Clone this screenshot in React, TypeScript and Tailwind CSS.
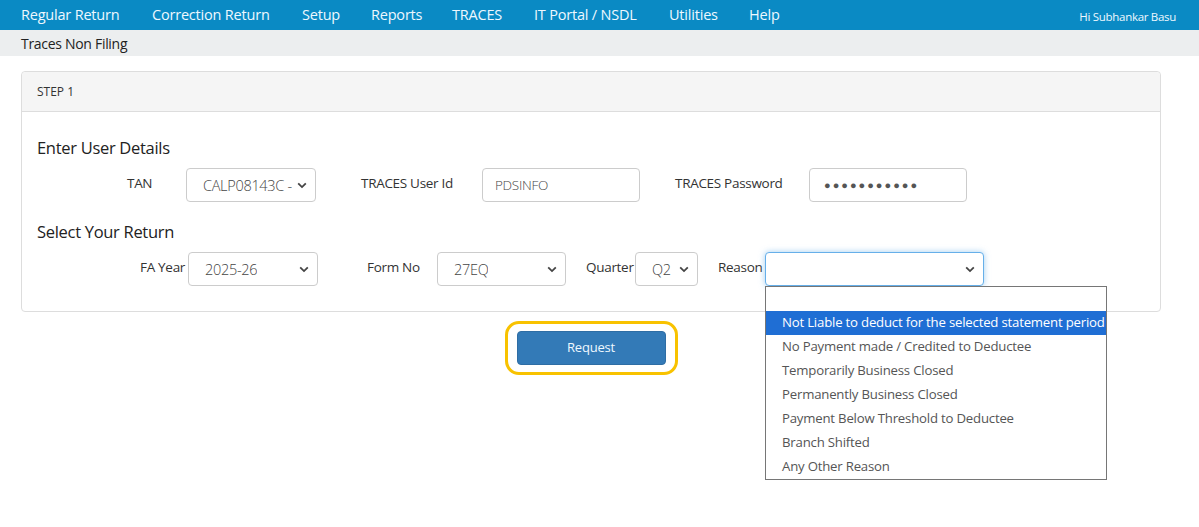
import { ReactNode } from "react";

const navItems = [
  { label: "Regular Return", x: 21 },
  { label: "Correction Return", x: 152 },
  { label: "Setup", x: 302 },
  { label: "Reports", x: 371 },
  { label: "TRACES", x: 452 },
  { label: "IT Portal / NSDL", x: 534 },
  { label: "Utilities", x: 669 },
  { label: "Help", x: 749 },
];

const reasons = [
  "Not Liable to deduct for the selected statement period",
  "No Payment made / Credited to Deductee",
  "Temporarily Business Closed",
  "Permanently Business Closed",
  "Payment Below Threshold to Deductee",
  "Branch Shifted",
  "Any Other Reason",
];

function Chevron() {
  return (
    <svg width="10" height="7" viewBox="0 0 10 7" className="shrink-0">
      <path d="M1.2 1.3 L5 5.1 L8.8 1.3" fill="none" stroke="#444" strokeWidth="1.8" />
    </svg>
  );
}

function FakeSelect({ value, width, focused }: { value: string; width: string; focused?: boolean }) {
  return (
    <div
      className={`${width} h-[34px] flex items-center justify-between pl-[16px] pr-[8px] rounded-[4px] bg-white border text-[14.5px] font-light text-[#444] ${
        focused ? "border-[#66afe9] shadow-[0_0_6px_rgba(102,175,233,0.6)]" : "border-[#ccc]"
      }`}
    >
      <span className="truncate pt-[2px]">{value}</span>
      <Chevron />
    </div>
  );
}

function FakeInput({ children, width }: { children: ReactNode; width: string }) {
  return (
    <div className={`${width} h-[34px] flex items-center px-[12px] rounded-[4px] bg-white border border-[#ccc] text-[13.5px] font-light text-[#444]`}>
      {children}
    </div>
  );
}

export default function App() {
  return (
    <div className="min-h-[527px] bg-white font-['Open_Sans','Noto_Sans',sans-serif] text-[#333]">
      {/* top menu */}
      <div className="relative h-[30px] bg-[#0a8ac4] text-[#eef8ff]">
        {navItems.map((n) => (
          <span key={n.label} className="absolute top-[4px] text-[14.5px] tracking-[-0.2px]" style={{ left: n.x }}>
            {n.label}
          </span>
        ))}
        <span className="absolute right-[23px] top-[8px] text-[11.5px] tracking-[-0.3px]">Hi Subhankar Basu</span>
      </div>
      <div className="h-[26px] bg-[#eceeef] pl-[21px] flex items-center text-[14px] tracking-[-0.3px] text-[#222]">
        Traces Non Filing
      </div>

      <div className="px-[21px] pt-[15px] w-[1182px]">
        <div className="border border-[#ddd] rounded-[4px]">
          <div className="h-[40px] bg-[#f5f5f5] border-b border-[#ddd] rounded-t-[4px] flex items-center pl-[15px] text-[12px] text-[#333]">
            STEP 1
          </div>
          <div className="pl-[15px] pt-[24px] pb-[25px]">
            <div className="h-[24px] text-[16.5px] leading-[24px] tracking-[-0.3px] text-[#222]">Enter User Details</div>
            <div className="mt-[8px] flex items-center pl-[90px] text-[13.5px] tracking-[-0.3px]">
              <div className="w-[59px] -mt-[4px]">TAN</div>
              <FakeSelect value="CALP08143C -" width="w-[130px]" />
              <div className="w-[121px] ml-[45px] -mt-[4px]">TRACES User Id</div>
              <FakeInput width="w-[158px]">PDSINFO</FakeInput>
              <div className="w-[134px] ml-[35px] -mt-[4px]">TRACES Password</div>
              <FakeInput width="w-[158px]">
                <span className="tracking-[2px] text-[#555] text-[11px] pl-[2px]">●●●●●●●●●●●</span>
              </FakeInput>
            </div>

            <div className="mt-[18px] h-[24px] text-[16.5px] leading-[24px] tracking-[-0.3px] text-[#222]">Select Your Return</div>
            <div className="mt-[8px] flex items-center pl-[103px] text-[13.5px] tracking-[-0.3px]">
              <div className="w-[48px] -mt-[4px]">FA Year</div>
              <FakeSelect value="2025-26" width="w-[130px]" />
              <div className="w-[70px] ml-[49px] -mt-[4px]">Form No</div>
              <FakeSelect value="27EQ" width="w-[129px]" />
              <div className="w-[49px] ml-[20px] -mt-[4px]">Quarter</div>
              <FakeSelect value="Q2" width="w-[63px]" />
              <div className="w-[47px] ml-[20px] -mt-[4px]">Reason</div>
              <div className="relative">
                <FakeSelect value="" width="w-[219px]" focused />
                <div className="absolute left-0 top-full w-[342px] bg-white border border-[#767676] z-10 text-[13.2px] tracking-[-0.2px] text-[#555]">
                  <div className="h-[24px]" />
                  {reasons.map((r, i) => (
                    <div
                      key={r}
                      className={`h-[24px] flex items-center pl-[16px] whitespace-nowrap ${i === 0 ? "bg-[#1f6ed4] text-white" : ""}`}
                    >
                      {r}
                    </div>
                  ))}
                </div>
              </div>
            </div>
          </div>
        </div>

        <div className="mt-[9px] flex justify-center">
          <div className="border-[3px] border-[#f8c200] rounded-[14px] px-[9px] py-[7px]">
            <button className="w-[149px] h-[34px] rounded-[4px] bg-[#337ab7] border border-[#2e6da4] text-[#eef8ff] text-[13px] tracking-[-0.2px]">
              Request
            </button>
          </div>
        </div>
      </div>
    </div>
  );
}
